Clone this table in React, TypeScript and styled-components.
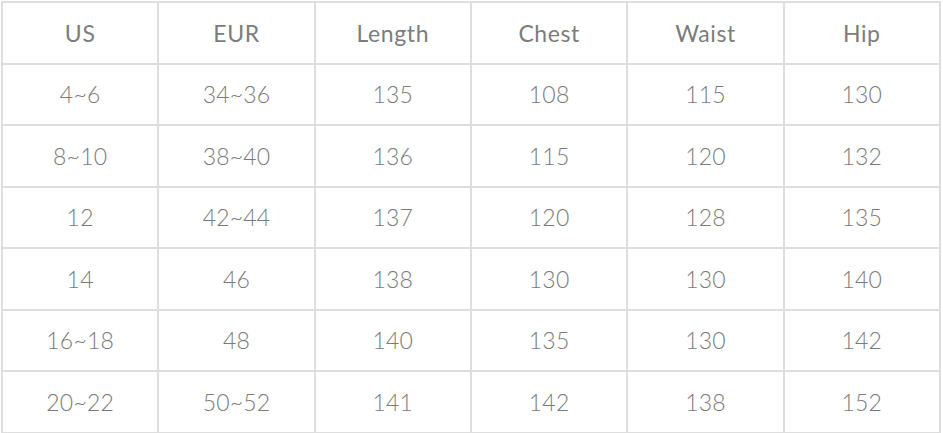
import styled, { createGlobalStyle } from 'styled-components';

const GlobalStyle = createGlobalStyle`
  html, body {
    margin: 0;
    padding: 0;
    background: #ffffff;
  }
  body {
    font-family: Lato, "Open Sans", "Liberation Sans", sans-serif;
  }
`;

const Page = styled.div`
  padding: 1px 0 0 1px;
`;

const SizeTable = styled.table`
  width: 940px;
  border-collapse: collapse;
  table-layout: fixed;
`;

const HeadCell = styled.th`
  border: 2px solid #dedede;
  height: 59.5px;
  font-weight: 400;
  font-size: 23px;
  letter-spacing: 0.6px;
  color: #7c7c7c;
  text-align: center;
  padding: 0;
`;

const Cell = styled.td`
  border: 2px solid #dedede;
  height: 59.5px;
  font-weight: 300;
  font-size: 23px;
  letter-spacing: 0.2px;
  color: #7a7a7a;
  text-align: center;
  padding: 0;
`;

const headers = ['US', 'EUR', 'Length', 'Chest', 'Waist', 'Hip'];

const rows = [
  ['4~6', '34~36', '135', '108', '115', '130'],
  ['8~10', '38~40', '136', '115', '120', '132'],
  ['12', '42~44', '137', '120', '128', '135'],
  ['14', '46', '138', '130', '130', '140'],
  ['16~18', '48', '140', '135', '130', '142'],
  ['20~22', '50~52', '141', '142', '138', '152'],
];

export default function App() {
  return (
    <Page>
      <GlobalStyle />
      <SizeTable>
        <thead>
          <tr>
            {headers.map((h) => (
              <HeadCell key={h}>{h}</HeadCell>
            ))}
          </tr>
        </thead>
        <tbody>
          {rows.map((row) => (
            <tr key={row[0]}>
              {row.map((v, i) => (
                <Cell key={i}>{v}</Cell>
              ))}
            </tr>
          ))}
        </tbody>
      </SizeTable>
    </Page>
  );
}
